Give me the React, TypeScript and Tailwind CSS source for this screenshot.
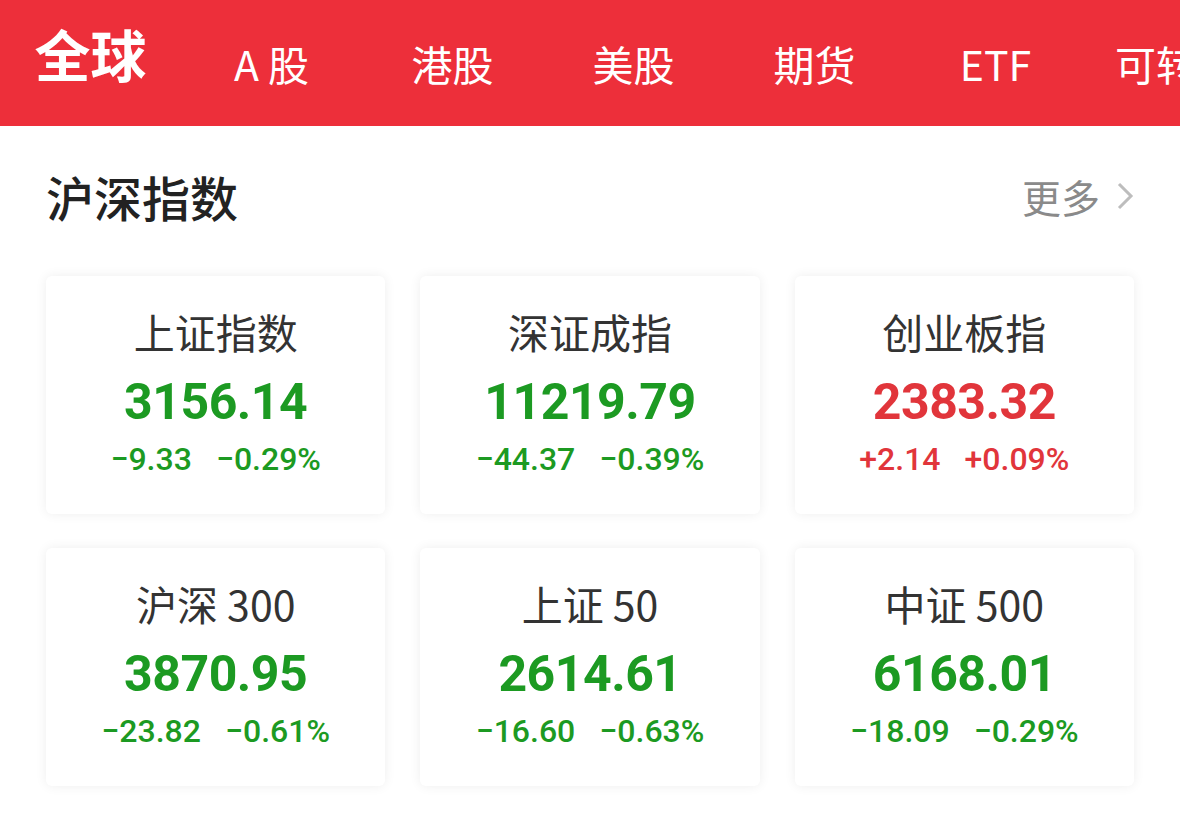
import React from "react";

type Quote = {
  name: string;
  price: string;
  change: string;
  percent: string;
  up: boolean;
};

const tabs = ["全球", "A 股", "港股", "美股", "期货", "ETF", "可转债"];

const quotes: Quote[] = [
  { name: "上证指数", price: "3156.14", change: "−9.33", percent: "−0.29%", up: false },
  { name: "深证成指", price: "11219.79", change: "−44.37", percent: "−0.39%", up: false },
  { name: "创业板指", price: "2383.32", change: "+2.14", percent: "+0.09%", up: true },
  { name: "沪深 300", price: "3870.95", change: "−23.82", percent: "−0.61%", up: false },
  { name: "上证 50", price: "2614.61", change: "−16.60", percent: "−0.63%", up: false },
  { name: "中证 500", price: "6168.01", change: "−18.09", percent: "−0.29%", up: false },
];

const cjk = "font-['Noto_Sans_CJK_SC',sans-serif]";
const num = "font-['Roboto','Noto_Sans_CJK_SC',sans-serif]";

function QuoteCard({ q }: { q: Quote }) {
  const color = q.up ? "text-[#e1353b]" : "text-[#1c9a22]";
  return (
    <div className="h-[238px] bg-white rounded-[6px] shadow-[0_0_12px_rgba(0,0,0,0.07)] flex flex-col items-center pt-[28px]">
      <div className={`${cjk} text-[41px] leading-[54px] text-[#333] whitespace-pre`}>{q.name}</div>
      <div className={`${num} ${color} text-[50px] leading-[60px] font-bold mt-[14px] tracking-[-0.5px]`}>
        {q.price}
      </div>
      <div className={`${num} ${color} text-[32px] leading-[40px] font-medium mt-[7px] flex gap-[24px]`}>
        <span>{q.change}</span>
        <span>{q.percent}</span>
      </div>
    </div>
  );
}

export default function App() {
  return (
    <div className="w-[1180px] h-[830px] bg-white overflow-hidden">
      {/* top market tabs */}
      <div className="h-[126px] bg-[#ed2f3a] flex items-center whitespace-nowrap">
        {tabs.map((t, i) => (
          <div key={t} className="w-[181px] shrink-0 flex justify-center">
            <span
              className={`${cjk} text-white whitespace-pre ${
                i === 0 ? "text-[56px] font-bold leading-[60px] -mt-[20px]" : "text-[41px] leading-[50px]"
              }`}
            >
              {t}
            </span>
          </div>
        ))}
      </div>

      {/* section header */}
      <div className="h-[150px] flex items-center justify-between pl-[46px] pr-[46px] pb-[10px]">
        <h2 className={`${cjk} text-[48px] font-medium text-[#222]`}>沪深指数</h2>
        <div className="flex items-center gap-[16px]">
          <span className={`${cjk} text-[39px] text-[#8a8a8a]`}>更多</span>
          <svg width="18" height="30" viewBox="0 0 18 30" fill="none">
            <path d="M3 3l12 12-12 12" stroke="#bdbdbd" strokeWidth="3" />
          </svg>
        </div>
      </div>

      {/* index cards */}
      <div className="grid grid-cols-3 gap-x-[35px] gap-y-[34px] px-[46px]">
        {quotes.map((q) => (
          <QuoteCard key={q.name} q={q} />
        ))}
      </div>
    </div>
  );
}
